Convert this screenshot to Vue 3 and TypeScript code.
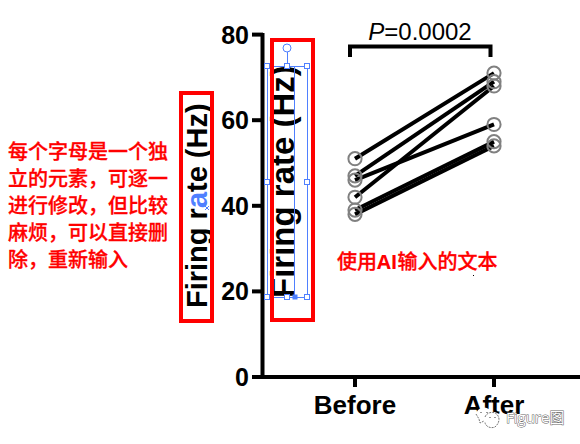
<script setup lang="ts">
interface Pair { before: number; after: number }
interface Point { x: number; y: number }

const zeroY = 377
const unit = 4.28
const beforeX = 355
const afterX = 494

const ticks: number[] = [80, 60, 40, 20, 0]
const pairs: Pair[] = [
  { before: 51, after: 71 },
  { before: 47, after: 69 },
  { before: 46, after: 59 },
  { before: 42, after: 68 },
  { before: 39, after: 55 },
  { before: 38, after: 54 },
]
const groups = [
  { name: 'Before', x: beforeX },
  { name: 'After', x: afterX },
]
const note: string[] = [
  '每个字母是一个独',
  '立的元素，可逐一',
  '进行修改，但比较',
  '麻烦，可以直接删',
  '除，重新输入',
]
const handles: Point[] = [
  { x: 267, y: 66 }, { x: 287, y: 66 }, { x: 307, y: 66 },
  { x: 267, y: 182 }, { x: 307, y: 182 },
  { x: 267, y: 297 }, { x: 287, y: 297 }, { x: 307, y: 297 },
]

const toY = (value: number): number => zeroY - value * unit
</script>

<template>
  <main class="figure" lang="zh-CN">
    <svg class="chart" viewBox="0 0 580 444" role="img" aria-label="Firing rate (Hz), Before and After">
      <g class="axis">
        <path d="M262.500 33V379M261 377H580" />
        <path v-for="t in ticks" :key="t" :d="`M252 ${toY(t)}H263`" />
        <path v-for="g in groups" :key="g.name" :d="`M${g.x} 377V387`" />
      </g>
      <text v-for="t in ticks" :key="t" class="tick-label" x="249" :y="toY(t) + 9">{{ t }}</text>
      <text v-for="g in groups" :key="g.name" class="group-label" :x="g.x" y="414">{{ g.name }}</text>

      <path class="bracket" d="M350 57V46.500H490.500V57" />
      <text class="p-value" x="420" y="40"><tspan class="italic">P</tspan>=0.0002</text>

      <g class="lines">
        <line
          v-for="p in pairs" :key="p.before"
          :x1="beforeX" :y1="toY(p.before)" :x2="afterX" :y2="toY(p.after)"
        />
      </g>
      <g class="points">
        <template v-for="p in pairs" :key="p.before">
          <circle :cx="beforeX" :cy="toY(p.before)" r="6.600" />
          <circle :cx="afterX" :cy="toY(p.after)" r="6.600" />
        </template>
      </g>

      <text class="title small" transform="translate(207 308) rotate(-90)">Firing r<tspan class="picked">a</tspan>te (Hz)</text>
      <path class="anchor" d="M205 206l4 4M209 206l-4 4" />
      <text class="title large" transform="translate(294 298) rotate(-90)">Firing rate (Hz)</text>

      <rect class="frame" x="181" y="93" width="31" height="228" />
      <path class="frame" d="M272 40H313V320H272Z" />

      <g class="selection">
        <path d="M267.500 66.500H307.500V297.500H267.500ZM294.500 66V297M287.500 52V66" />
        <circle cx="287" cy="48" r="4" />
        <rect v-for="h in handles" :key="`${h.x}-${h.y}`" :x="h.x - 2.5" :y="h.y - 2.5" width="5" height="5" />
        <rect class="solid" x="293" y="295" width="4" height="4" />
      </g>
      <path class="frame" d="M272 44V316" />

      <text class="note">
        <tspan v-for="(line, i) in note" :key="line" x="8" :y="159 + i * 27">{{ line }}</tspan>
      </text>
      <text class="note" x="337" y="269">使用<tspan class="latin">AI</tspan>输入的文本</text>
      <rect x="473" y="275" width="1" height="1" />

      <g class="logo">
        <path class="bubble" d="M479 423l1-4c-6-5-3-10 2-11 5-1 9 1 10 6-5 0-8 3-8 7-2 0-3 0-5 2Z" />
        <path class="bubble" d="M485 420c0-5 4-8 8-8 9 0 10 11 3 14l1 2-4-1c-5 0-8-3-8-7Z" />
        <path class="bubble-line" d="M476 414l3 5 1 4 4-2M485 417c2-6 13-7 14 2 0 4-2 6-4 8-5 2-10-1-10-5" />
        <path class="eyes" d="M481 412v1M487 412v1M490 417v1M495 417v1" />
      </g>
      <text class="watermark" x="506" y="423">Figure图</text>
    </svg>
  </main>
</template>

<style>
body {
  margin: 0;
  background: #fff;
}
</style>

<style scoped>
.figure {
  width: 100%;
}
.chart {
  display: block;
  width: 100%;
  height: auto;
  font-family: "Liberation Sans", Arial, sans-serif;
}
.axis path,
.bracket,
.lines line {
  fill: none;
  stroke: #000;
  stroke-width: 4;
}
.tick-label {
  font-size: 25px;
  font-weight: 700;
  text-anchor: end;
}
.group-label {
  font-size: 26px;
  font-weight: 700;
  text-anchor: middle;
}
.p-value {
  font-size: 24px;
  text-anchor: middle;
}
.italic {
  font-style: italic;
}
.points circle {
  fill: none;
  stroke: #808080;
  stroke-width: 2;
}
.title {
  font-weight: 700;
}
.small {
  font-size: 29px;
}
.large {
  font-size: 33px;
}
.picked {
  fill: #4f80ff;
}
.anchor {
  stroke: #4f80ff;
}
.selection path {
  fill: none;
  stroke: #4f80ff;
}
.selection circle,
.selection rect {
  fill: #fff;
  stroke: #4f80ff;
}
.selection .solid {
  fill: #4f80ff;
}
.frame {
  fill: none;
  stroke: #f00;
  stroke-width: 4;
}
.note {
  fill: #f00;
  font-family: "Open Sans", "Noto Sans CJK SC", sans-serif;
  font-size: 20px;
  font-weight: 500;
  stroke: #f00;
  stroke-width: 0.3px;
}
.latin {
  font-weight: 700;
  stroke: none;
}
.bubble {
  fill: #fff;
}
.bubble-line {
  fill: none;
  stroke: #777;
  stroke-width: 1;
  stroke-dasharray: 2 1;
}
.eyes {
  stroke: #333;
}
.watermark {
  fill: #fff;
  stroke: #666;
  stroke-width: 1px;
  paint-order: stroke;
  font-family: "Open Sans", "Noto Sans CJK SC", sans-serif;
  font-size: 15px;
}
</style>
